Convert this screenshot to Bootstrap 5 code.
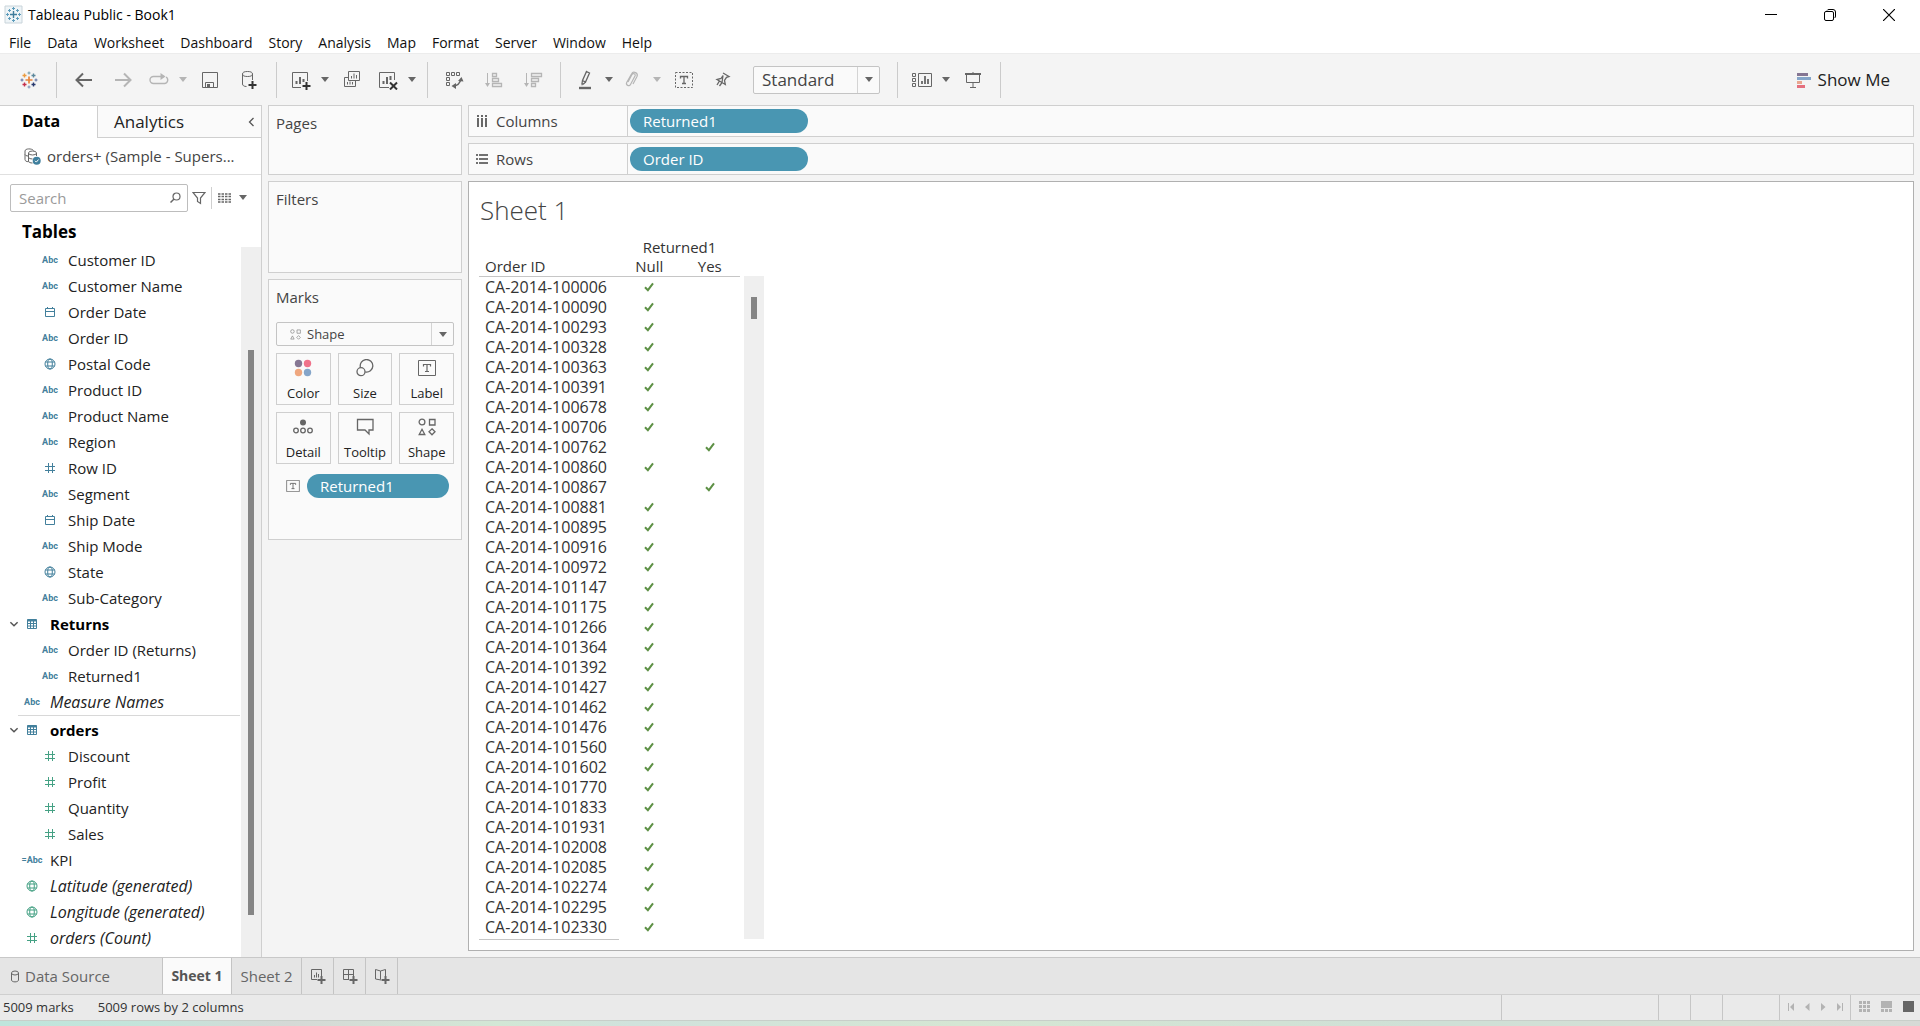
<!DOCTYPE html>
<html lang="en">
<head>
<meta charset="utf-8">
<meta name="viewport" content="width=device-width, initial-scale=1">
<title>Tableau Public - Book1</title>
<link rel="stylesheet" href="https://cdn.jsdelivr.net/npm/bootstrap@5.3.0/dist/css/bootstrap.min.css">
<style>
:root{--line:#cfcfcf;--pill:#4996b2;--shelf:#fafafa;--pane:#f4f4f4}
body{font-family:"Open Sans","Noto Sans",sans-serif;font-size:15px;line-height:20px;color:#222;background:var(--pane);overflow:hidden}
button{border:0;background:none;padding:0;color:inherit}
svg{display:block;flex:none;fill:none;stroke:currentColor}
svg.flat-fill{stroke:none}
.titlebar{height:29px;background:#fff;font-size:14px;color:#000}
.winbtns{margin-right:2px}
.winbtn{width:59px;height:29px}
.menubar{height:25px;background:#fff;font-size:14px;gap:16px;padding:3px 9px 0;border-bottom:1px solid #ececec}
.menubar a{color:#111;text-decoration:none}
.tools{height:51px;color:#666}
.tools .sep{width:1px;height:36px;background:#cbcbcb}
.toolset{padding:0 8px 0 7px}
.toolset.start{padding-left:9px}
.toolset button,.showme{height:36px;display:flex;align-items:center;justify-content:center}
.w-tool{width:39px}.w-drop{width:34px}.w-caret{width:14px}
.off{color:#b5b5b5}
.caret-mark{width:0;height:0;border:4px solid transparent;border-top:5px solid #666;border-bottom:0}
.off .caret-mark{border-top-color:#b5b5b5}
.picker{border:1px solid #c4c4c4;border-radius:2px;background:var(--shelf)}
.picker select{appearance:none;border:0;background:none;outline:0;color:#444;min-width:0}
.picker .drop{width:22px;border-left:1px solid #d4d4d4}
.fitpick{width:127px;height:28px;margin:0 9px 0 11px;font-size:17px}
.fitpick select{padding:0 0 0 8px}
.showme{font-size:17px;color:#222;gap:7px;margin-right:30px}
.datapane{width:262px;background:#fff;border-right:1px solid var(--line);border-top:1px solid var(--line)}
.panetabs{height:32px}
.panetabs button{text-align:left}
.tab-data{width:97px;padding:0 0 2px 22px!important;font-size:16px;font-weight:700;color:#000!important}
.tab-an{background:var(--shelf);border-left:1px solid var(--line)!important;border-bottom:1px solid var(--line)!important;font-size:17px;padding-left:16px!important}
.chev{background:var(--shelf);border-bottom:1px solid var(--line)!important;width:20px;color:#555!important}
.source{height:37px;border-bottom:1px solid #e0e0e0;padding:0 24px;gap:6px;color:#444}
.findrow{padding:9px 14px 0 10px;height:36px;color:#666}
.findbox{width:178px;height:28px;border:1px solid #bdbdbd;border-radius:2px}
.findbox input{border:0;outline:0;width:159px;padding:0 8px;background:none}
.findbox input::placeholder{color:#9a9a9a}
.findrule{width:1px;height:22px;background:#cfcfcf;margin:0 6px 0 5px}
.tables-head{font-size:17px;font-weight:700;padding:11px 22px 0;height:36px;color:#000;margin:0;line-height:20px}
.fields{width:240px}
.fieldrow{height:26px;display:flex;align-items:center;color:#222}
.fieldrow .ic{width:24px;display:flex;justify-content:center;margin-right:6px;color:#43809c}
.fieldrow.deep .ic{margin-left:38px}
.fieldrow.flat .ic{margin-left:20px}
.fieldrow.head{font-weight:700;color:#000}
.fieldrow.head .tog{width:12px;margin-left:8px;color:#555}
.fieldrow.meas .ic{color:#45a184}
.fieldrow.gen{font-style:italic;font-size:16px}
.abc{font:700 9px/12px Roboto,sans-serif;white-space:nowrap}
.cut{border-top:1px solid #d8d8d8;margin-left:18px;height:2px}
.track{width:20px;background:#efefef}
.thumb{width:6px;background:#858585;margin:0 auto}
.pane-thumb{height:565px;margin-top:103px}
.cards{width:194px;margin:0 6px}
.card-gap{margin-top:6px}
.shelfbox{background:var(--shelf);border:1px solid var(--line)}
.cards .shelfbox{padding:7px 7px 0;color:#444}
.pages{height:70px}.filters{height:92px}.marks{height:261px}
.marktype{height:24px;margin-top:15px;font-size:13px;color:#777}
.marktype svg{margin-left:13px}
.marktype select{padding:0 0 0 6px}
.markbtns{gap:7px;margin-top:7px}
.markbtns button{flex:1 1 0;height:52px;border:1px solid var(--line);font-size:13px;line-height:18px;color:#222}
.markbtns svg{color:#666;margin:3px auto 7px}
.tok{background:var(--pill);color:#fff;border-radius:12px;height:24px;line-height:24px;padding:0 13px}
.markfield{gap:7px;padding:0 5px 0 10px;margin-top:10px;color:#666}
.work{min-width:0;margin-right:6px}
.shelfrow{height:32px}
.shelfname{width:159px;border-right:1px solid var(--line);padding-left:7px;gap:8px;color:#444}
.shelfrow .tok{width:178px;margin-left:2px}
.sheet{background:#fff;border:1px solid #b0b0b0;margin-bottom:6px;padding:13px 10px 0}
.sheet h1{font-size:26px;font-weight:300;line-height:30px;color:#444;margin:0 0 12px 1px}
.crosstab{border-collapse:separate;border-spacing:0;table-layout:fixed;width:261px;color:#333}
.crosstab th,.crosstab td{font-weight:400;height:20px;line-height:20px;padding:0;text-align:center}
.crosstab tbody{font-size:16px}
.crosstab .first{width:140px;text-align:left;padding-left:6px}
.crosstab .yn{width:60px}
.crosstab thead tr:last-child th{border-bottom:1px solid #c6c6c6;line-height:19px}
.crosstab svg{margin:auto;color:#5d9045}
.crosstab tfoot td{height:3px;border-bottom:1px solid #c6c6c6}
.crosstab tfoot td+td{border:0}
.sheet .track{margin:39px 0 0 4px;height:663px}
.sheet-thumb{height:22px;margin-top:21px}
.sheettabs{height:38px;background:#e5e5e5;border-top:1px solid #c8c8c8;border-bottom:1px solid #cfcfcf;color:#666}
.sheettabs button{border-right:1px solid #c4c4c4;height:36px;display:flex;align-items:center;justify-content:center}
.src-tab{width:163px;justify-content:flex-start!important;padding-left:10px;gap:5px}
.ws-tab{width:69px}
.ws-tab.on{background:#fafafa;font-weight:700;font-size:14px;color:#555}
.ws-tab.two{width:70px}
.new-tab{width:32px}
.statusbar{height:25px;background:#eaeaea;font-size:13px;color:#333;padding-left:3px;gap:24px}
.statusbar>span{padding-bottom:2px}
.slot{height:25px;border-left:1px solid #c6c6c6;display:flex;align-items:center;color:#b3b3b3}
.slot svg{fill:currentColor;stroke:none;margin-bottom:2px}
.s157{width:157px}.s32{width:32px}.s57{width:57px}.s71{width:71px;justify-content:center;gap:11px}.s70{width:70px;gap:11px;padding-left:8px}
.desk{height:6px;border-top:1px solid #c8cfc9;background:linear-gradient(90deg,#bfe5dc,#c4e4da 8%,#d5d9d6 15%,#d2e7d5 26%,#d0e2dc 33%,#d5e6d3 50%,#cfe0d6 75%,#d5e0d5 90%,#d6dad6)}
</style>
</head>
<body class="vh-100 d-flex flex-column">
<svg width="0" height="0" class="position-absolute" aria-hidden="true">
<defs>
<symbol id="i-hash" viewBox="0 0 12 12"><path d="M4.500 1v10M8.500 1v10M1 4.500h10M1 8.500h10" stroke-width="1"/></symbol>
<symbol id="i-cal" viewBox="0 0 12 12"><path d="M1.500 2.500h9v8h-9zM1.500 5.500h9M3.500 1v2M8.500 1v2"/></symbol>
<symbol id="i-globe" viewBox="0 0 12 12"><circle cx="6" cy="6" r="5"/><ellipse cx="6" cy="6" rx="2.300" ry="5"/><path d="M1.500 4h9M1.500 8h9"/></symbol>
<symbol id="i-table" viewBox="0 0 12 12"><path d="M1.500 1.500h9v9h-9zM1.500 5.500h9M1.500 8h9M4.500 3v7.500M7.500 3v7.500"/><path d="M1.500 2.500h9" stroke-width="2"/></symbol>
<symbol id="i-down" viewBox="0 0 10 10"><path d="M2 3.500l3 3 3-3" stroke-width="1.200"/></symbol>
<symbol id="i-tick" viewBox="0 0 10 10"><path d="M1 5.200l2.900 3L9 1.400" stroke-width="2"/></symbol>
<symbol id="i-text" viewBox="0 0 18 16"><path d="M.5.500h17v15H.5z"/><path d="M5.500 6.500v-2h7v2M9 4.500v7M7 11.500h4" stroke-width="1.200"/></symbol>
<symbol id="i-shapes" viewBox="0 0 18 18"><circle cx="4" cy="4" r="2.900"/><path d="M11.500 1.500h5.500v5.500h-5.500zM4 11.300L6.800 16.500H1.200zM14 10.800l3 3-3 3-3-3z"/></symbol>
</defs>
</svg>

<header>
<div class="titlebar d-flex align-items-center">
  <svg width="20" height="20" class="ms-1" viewBox="0 0 20 20"><path d="M1 1h17v17H1z" fill="#eef4f7" stroke="#c9d4da"/><path d="M9.500 6v7M6 9.500h7" stroke="#3f7c9c" stroke-width="1.400"/><g stroke="#5d9cbb"><path d="M9.500 2v3M8 3.500h3M9.500 14v3M8 15.500h3M3.500 8v3M2 9.500h3M15.500 8v3M14 9.500h3M5.500 4v3M4 5.500h3M13.500 4v3M12 5.500h3M5.500 12v3M4 13.500h3M13.500 12v3M12 13.500h3"/></g></svg>
  <span class="ps-1">Tableau Public - Book1</span>
  <div class="winbtns ms-auto d-flex">
    <button class="winbtn" aria-label="Minimize"><svg class="m-auto" width="12" height="12"><path d="M0 5.500h12"/></svg></button>
    <button class="winbtn" aria-label="Restore"><svg class="m-auto" width="12" height="12"><rect x=".5" y="2.500" width="9" height="9" rx="1.500"/><path d="M3 1.500Q3.500.500 5 .5h4q2.500 0 2.500 2.500v4q0 1.500-1 2"/></svg></button>
    <button class="winbtn" aria-label="Close"><svg class="m-auto" width="12" height="12"><path d="M0 0l12 12M12 0L0 12" stroke-width="1.200"/></svg></button>
  </div>
</div>
<nav class="menubar d-flex align-items-center" aria-label="Menu">
  <a href="#">File</a><a href="#">Data</a><a href="#">Worksheet</a><a href="#">Dashboard</a><a href="#">Story</a><a href="#">Analysis</a><a href="#">Map</a><a href="#">Format</a><a href="#">Server</a><a href="#">Window</a><a href="#">Help</a>
</nav>
<div class="tools d-flex align-items-center">
  <div class="toolset start"><button class="w-tool" aria-label="Start page"><svg width="18" height="18" viewBox="0 0 18 18" stroke-width="1.400"><path d="M9 5.500v7M5.500 9h7" stroke="#e8833a" stroke-width="1.700"/><path d="M9 .5v3M7.500 2h3" stroke="#7199a6" stroke-width="1"/><path d="M9 14.500v3M7.500 16h3" stroke="#7a8fb5" stroke-width="1"/><path d="M2 7.500v3M.5 9h3M16 7.500v3M14.500 9h3" stroke="#5c6ea0" stroke-width="1"/><path d="M4.500 2.500v4M2.500 4.500h4" stroke="#eb9b3f"/><path d="M13.500 2.500v4M11.500 4.500h4" stroke="#5b879b"/><path d="M4.500 11.500v4M2.500 13.500h4" stroke="#c5304c"/><path d="M13.500 11.500v4M11.500 13.500h4" stroke="#27386e"/></svg></button></div>
  <div class="sep"></div>
  <div class="toolset d-flex">
    <button class="w-tool" aria-label="Undo"><svg width="18" height="16"><path d="M17 8H2M8 1.500L1.500 8 8 14.500" stroke-width="2"/></svg></button>
    <button class="w-tool off" aria-label="Redo"><svg width="18" height="16"><path d="M1 8h15M10 1.500L16.500 8 10 14.500" stroke-width="2"/></svg></button>
    <button class="w-drop off" aria-label="Replay"><svg width="20" height="16"><path d="M11 4.500H4.500a3.500 3.500 0 0 0 0 7h11a3.500 3.500 0 0 0 1.500-6.500M11 4.500h4" stroke-width="1.400"/><path d="M11.500 1l5 3.500-5 3.500z" fill="currentColor" stroke="none"/></svg></button>
    <button class="w-caret off" aria-label="Replay options"><span class="caret-mark"></span></button>
    <button class="w-tool" aria-label="Save"><svg width="18" height="18"><path d="M1.500 1.500h15v15h-15zM4.500 16.500v-5h8v5"/><path d="M6 13h3v3.500H6z" fill="currentColor" stroke="none"/></svg></button>
    <button class="w-tool" aria-label="New data source"><svg width="18" height="20"><ellipse cx="7.500" cy="4" rx="5" ry="2.500"/><path d="M2.500 4v10c0 1.500 1.500 2.500 4 2.500M12.500 4v6"/><path d="M12.500 11v8M8.500 15h8" stroke="#333" stroke-width="2"/></svg></button>
  </div>
  <div class="sep"></div>
  <div class="toolset d-flex">
    <button class="w-drop" aria-label="New worksheet"><svg width="20" height="20"><path d="M10 17.500H1.500v-15h15V11"/><path d="M5.500 14v-3M9 14V7M12.500 12V9" stroke-width="2"/><path d="M15.500 12v8M11.500 16h8" stroke="#333" stroke-width="2"/></svg></button>
    <button class="w-caret" aria-label="New worksheet options"><span class="caret-mark"></span></button>
    <button class="w-tool" aria-label="Duplicate"><svg width="20" height="20"><path d="M6.500 1.500h11v9h-11zM6.500 7.500h-4v9h11v-6M9.500 8.500V6M12 8.500v-5M14.500 8.500V5M5.500 14.500V12M8 14.500v-3M10.500 14.500V12"/></svg></button>
    <button class="w-drop" aria-label="Clear sheet"><svg width="20" height="20"><path d="M11 17.500H1.500v-15h15V10"/><path d="M5.500 14v-3M9 14V7M12.500 10V6" stroke-width="2"/><path d="M12 12.500l7 7M19 12.500l-7 7" stroke="#333" stroke-width="2"/></svg></button>
    <button class="w-caret" aria-label="Clear options"><span class="caret-mark"></span></button>
  </div>
  <div class="sep"></div>
  <div class="toolset d-flex">
    <button class="w-tool" aria-label="Swap rows and columns"><svg width="20" height="20"><path d="M1.500 2.500h3v3h-3zM6.500 2.500h3v3h-3zM11.500 2.500h3v3h-3zM1.500 7.500h3v3h-3zM1.500 12.500h3v3h-3z"/><path d="M8.500 16q6-.5 7.500-7" stroke-width="1.300"/><path d="M13 11l3.500-4 2 4.500zM11 13l-4.500 3 4.500 3z" fill="currentColor" stroke="none"/></svg></button>
    <button class="w-tool off" aria-label="Sort ascending"><svg width="20" height="18"><path d="M3.500 2v11" /><path d="M1 12h5l-2.500 4z" fill="currentColor" stroke="none"/><path d="M8.500 2.500h4v3h-4zM8.500 7.500h6v3h-6zM8.500 12.500h9v3h-9z" stroke-width="1.300"/></svg></button>
    <button class="w-tool off" aria-label="Sort descending"><svg width="20" height="18"><path d="M3.500 2v11"/><path d="M1 12h5l-2.500 4z" fill="currentColor" stroke="none"/><path d="M8.500 2.500h10v3h-10zM8.500 7.500h7v3h-7zM8.500 12.500h4v3h-4z" stroke-width="1.300"/></svg></button>
  </div>
  <div class="sep"></div>
  <div class="toolset d-flex align-items-center">
    <button class="w-drop" aria-label="Highlight"><svg width="18" height="20" class="ms-1"><path d="M8.500 1.500l3 1.500-4 9-3-1.500zM4.500 10.500L4 13.500l1.500.5 2-2M3.500 14.500l1 .5" stroke-width="1.300"/><path d="M1 18h12" stroke-width="2.400"/></svg></button>
    <button class="w-caret" aria-label="Highlight options"><span class="caret-mark"></span></button>
    <button class="w-drop off" aria-label="Group"><svg width="18" height="20"><path d="M4 12l4-7.500c1-1.800 4-.5 3 1.500l-4.500 8.500c-1.300 2.500-5 .5-3.800-2L7.500 4c1.800-3.500 7-1 5.500 2.500L9 14" stroke-width="1.200"/></svg></button>
    <button class="w-caret off" aria-label="Group options"><span class="caret-mark"></span></button>
    <button class="w-tool" aria-label="Show mark labels"><svg width="18" height="16"><path d="M.5.500h17v15H.5z" stroke-dasharray="2 1.500"/><path d="M5.500 6.500v-2h7v2M9 4.500v7M7 11.500h4" stroke-width="1.300"/></svg></button>
    <button class="w-tool" aria-label="Fix axes"><svg width="18" height="18" viewBox="0 0 18 18"><path d="M9 2l6 3.500-2.500.8-2 3.200.8 4L8 11.500 5.500 15M8 11.500L3 8.500l4-1L9 4.500zM5.500 9.800L3 14" stroke-width="1.300"/></svg></button>
    <label class="picker fitpick d-flex"><select class="flex-fill" aria-label="Fit"><option>Standard</option><option>Entire View</option></select><span class="drop d-flex align-items-center justify-content-center"><span class="caret-mark"></span></span></label>
  </div>
  <div class="sep"></div>
  <div class="toolset d-flex">
    <button class="w-drop" aria-label="Show cards"><svg width="22" height="18"><path d="M7.500 2.500h13v13h-13zM1.500 2.500h3v3h-3zM1.500 7.500h3v3h-3zM1.500 12.500h3v3h-3z"/><path d="M11 13v-3M14 13V5M17 13V8" stroke-width="1.800"/></svg></button>
    <button class="w-caret" aria-label="Card options"><span class="caret-mark"></span></button>
    <button class="w-tool" aria-label="Presentation mode"><svg width="18" height="18"><path d="M2.500 3v8.500h13V3M9 1v2M9 11.500V16M6 16.500h6"/><path d="M1 3h16" stroke-width="2"/></svg></button>
  </div>
  <div class="sep"></div>
  <button class="showme ms-auto"><svg class="flat-fill" width="14" height="16"><path d="M0 1h11v3H0z" fill="#857693"/><path d="M0 5h14v3H0z" fill="#85a5c9"/><path d="M0 9h5v3H0z" fill="#eaa68f"/><path d="M0 13h8v3H0z" fill="#e5707e"/></svg>Show Me</button>
</div>
</header>

<main class="d-flex flex-fill overflow-hidden">
<aside class="datapane d-flex flex-column flex-shrink-0">
  <div class="panetabs d-flex">
    <button class="tab-data">Data</button><button class="tab-an flex-fill">Analytics</button><button class="chev" aria-label="Collapse pane"><svg class="mx-auto" width="7" height="10"><path d="M5.500 1L1.500 5l4 4" stroke-width="1.300"/></svg></button>
  </div>
  <div class="source d-flex align-items-center">
    <svg width="17" height="17"><path d="M9.500 2.500C8 .3 1 .3 1 3v8.500C1 13 2.500 13.700 4.500 13.700M1 6.500q.5 1.500 3 1.500M4.500 5v8c0 1.500 2 2 4 2M4.500 9.500q1 1.500 4 1.500M12.500 5v3" stroke="#666"/><ellipse cx="8.500" cy="5" rx="4" ry="2" stroke="#666"/><circle cx="12.700" cy="12.700" r="4" fill="#3f7f9d" stroke="none"/><path d="M11 12.800l1.300 1.300 2.300-2.600" stroke="#fff"/></svg>
    <span class="text-nowrap">orders+ (Sample - Supers...</span>
  </div>
  <div class="findrow d-flex align-items-center">
    <div class="findbox d-flex align-items-center"><input type="text" placeholder="Search" aria-label="Search fields"><button aria-label="Search"><svg width="11" height="11"><circle cx="6.500" cy="4.500" r="3.500" stroke-width="1.200"/><path d="M4 7L.5 10.500" stroke-width="1.500"/></svg></button></div>
    <button class="ms-1" aria-label="Filter fields"><svg width="14" height="14"><path d="M1 1.500h12L8.500 7v5.500l-3-2V7z" stroke-width="1.200"/></svg></button>
    <span class="findrule"></span>
    <button aria-label="View fields" class="d-flex align-items-center gap-2"><svg width="13" height="10"><path d="M0 1h13M0 3.500h13M0 6.500h13M0 9h13" stroke-dasharray="2.500 1" stroke-width="1.400"/></svg><span class="caret-mark"></span></button>
  </div>
  <h2 class="tables-head">Tables</h2>
  <div class="d-flex flex-fill">
    <ul class="fields list-unstyled m-0" id="fields"></ul>
    <div class="track ms-auto"><div class="thumb pane-thumb"></div></div>
  </div>
</aside>

<section class="cards d-flex flex-column flex-shrink-0" aria-label="Cards">
  <div class="shelfbox pages">Pages</div>
  <div class="shelfbox filters card-gap">Filters</div>
  <div class="shelfbox marks card-gap">Marks
    <label class="picker marktype d-flex align-items-center"><svg width="11" height="11"><use href="#i-shapes"/></svg><select class="flex-fill" aria-label="Mark type"><option>Shape</option><option>Automatic</option></select><span class="drop d-flex align-items-center justify-content-center align-self-stretch"><span class="caret-mark"></span></span></label>
    <div class="markbtns d-flex">
      <button><svg class="flat-fill" width="18" height="18"><circle cx="4.500" cy="4.500" r="3.700" fill="#857693"/><circle cx="13.500" cy="4.500" r="3.700" fill="#f0728a"/><circle cx="4.500" cy="13.500" r="3.700" fill="#efa77f"/><circle cx="13.500" cy="13.500" r="3.700" fill="#85a5c9"/></svg>Color</button>
      <button><svg width="18" height="18" stroke-width="1.300"><path d="M4.400 8.300A6.300 6.300 0 1 1 9.300 13"/><circle cx="5" cy="12.700" r="4"/></svg>Size</button>
      <button><svg width="18" height="18" viewBox="0 0 18 16"><use href="#i-text"/></svg>Label</button>
    </div>
    <div class="markbtns d-flex">
      <button><svg width="20" height="18" stroke-width="1.300"><circle cx="10" cy="4.500" r="3" fill="currentColor" stroke="none"/><circle cx="3" cy="12.500" r="2.300"/><circle cx="10" cy="12.500" r="2.300"/><circle cx="17" cy="12.500" r="2.300"/></svg>Detail</button>
      <button><svg width="18" height="18" stroke-width="1.300"><path d="M1.500 1.500h15.500v10.500h-4v4l-4-4H1.500z"/></svg>Tooltip</button>
      <button><svg width="18" height="18" stroke-width="1.300"><use href="#i-shapes"/></svg>Shape</button>
    </div>
    <div class="markfield d-flex align-items-center"><svg width="14" height="12"><use href="#i-text"/></svg><div class="tok flex-fill">Returned1</div></div>
  </div>
</section>

<section class="work flex-fill d-flex flex-column">
  <div class="shelfbox shelfrow d-flex align-items-center">
    <div class="shelfname d-flex align-items-center align-self-stretch"><svg width="12" height="12"><path d="M2 0v2M6 0v2M10 0v2M2 3v9M6 3v9M10 3v9" stroke-width="1.600"/></svg>Columns</div><div class="tok">Returned1</div>
  </div>
  <div class="shelfbox shelfrow d-flex align-items-center card-gap">
    <div class="shelfname d-flex align-items-center align-self-stretch"><svg width="12" height="12"><path d="M0 2h2M0 6h2M0 10h2M3 2h9M3 6h9M3 10h9" stroke-width="1.600"/></svg>Rows</div><div class="tok">Order ID</div>
  </div>
  <div class="sheet flex-fill card-gap">
    <h1>Sheet 1</h1>
    <div class="d-flex align-items-start">
      <table class="crosstab">
        <thead>
          <tr><th class="first"></th><th colspan="2">Returned1</th></tr>
          <tr><th class="first">Order ID</th><th class="yn">Null</th><th class="yn">Yes</th></tr>
        </thead>
        <tbody id="orders"></tbody>
        <tfoot><tr><td></td><td colspan="2"></td></tr></tfoot>
      </table>
      <div class="track"><div class="thumb sheet-thumb"></div></div>
    </div>
  </div>
</section>
</main>

<footer>
<div class="sheettabs d-flex">
  <button class="src-tab"><svg width="10" height="13"><ellipse cx="5" cy="3" rx="3.500" ry="2"/><path d="M1.500 3v7c0 2.500 7 2.500 7 0V3"/></svg>Data Source</button>
  <button class="ws-tab on">Sheet 1</button>
  <button class="ws-tab two">Sheet 2</button>
  <button class="new-tab" aria-label="New worksheet"><svg width="16" height="16"><path d="M7 11.500H1.500v-10h10V8M4.500 9.500V7M6.500 9.500V4.500M8.500 9.500V6"/><path d="M11.500 8v8M7.500 12h8" stroke-width="2"/></svg></button>
  <button class="new-tab" aria-label="New dashboard"><svg width="16" height="16"><path d="M7 11.500H1.500v-10h10V8M6.500 1.500v10M1.500 6.500h10"/><path d="M11.500 8v8M7.500 12h8" stroke-width="2"/></svg></button>
  <button class="new-tab" aria-label="New story"><svg width="16" height="16"><path d="M7 12L1.500 11V1.500L6.500 3l5-1.500V8M6.500 3v8.500"/><path d="M11.500 8v8M7.500 12h8" stroke-width="2"/></svg></button>
</div>
<div class="statusbar d-flex align-items-center">
  <span>5009 marks</span><span>5009 rows by 2 columns</span>
  <div class="ms-auto d-flex">
    <div class="slot s157"></div><div class="slot s32"></div><div class="slot s32"></div><div class="slot s57"></div>
    <div class="slot s71">
      <svg width="6" height="8"><path d="M0 0h1v8H0zM6 0v8L2 4z"/></svg><svg width="5" height="8"><path d="M4.500 0v8L0 4z"/></svg><svg width="5" height="8"><path d="M0 0v8l4.500-4z"/></svg><svg width="6" height="8"><path d="M5 0h1v8H5zM0 0v8l4-4z"/></svg>
    </div>
    <div class="slot s70">
      <svg width="11" height="11"><path d="M0 0h3v3H0zM4 0h3v3H4zM8 0h3v3H8zM0 4h3v3H0zM4 4h3v3H4zM8 4h3v3H8zM0 8h3v3H0zM4 8h3v3H4zM8 8h3v3H8z"/></svg>
      <svg width="11" height="11"><path d="M0 0h11v7H0zM0 8h3v3H0zM4 8h3v3H4zM8 8h3v3H8z"/></svg>
      <svg width="11" height="11"><path d="M0 0h11v11H0z" fill="#666"/></svg>
    </div>
  </div>
</div>
<div class="desk"></div>
</footer>

<script src="https://cdn.jsdelivr.net/npm/bootstrap@5.3.0/dist/js/bootstrap.bundle.min.js"></script>
<script>
// [name, icon, row classes]
const fields = [
  ["Customer ID","abc","deep"],["Customer Name","abc","deep"],["Order Date","cal","deep"],["Order ID","abc","deep"],
  ["Postal Code","globe","deep"],["Product ID","abc","deep"],["Product Name","abc","deep"],["Region","abc","deep"],
  ["Row ID","hash","deep"],["Segment","abc","deep"],["Ship Date","cal","deep"],["Ship Mode","abc","deep"],
  ["State","globe","deep"],["Sub-Category","abc","deep"],["Returns","table","head"],["Order ID (Returns)","abc","deep"],
  ["Returned1","abc","deep"],["Measure Names","abc","flat gen"],null,["orders","table","head"],
  ["Discount","hash","deep meas"],["Profit","hash","deep meas"],["Quantity","hash","deep meas"],["Sales","hash","deep meas"],
  ["KPI","calc","flat"],["Latitude (generated)","globe","flat gen meas"],["Longitude (generated)","globe","flat gen meas"],
  ["orders (Count)","hash","flat gen meas"]
];
const use = (id, s) => `<svg width="${s}" height="${s}"><use href="#i-${id}"/></svg>`;
document.getElementById("fields").innerHTML = fields.map(f => {
  if (!f) return '<li class="cut"></li>';
  const ic = f[1] === "abc" ? '<span class="abc">Abc</span>' : f[1] === "calc" ? '<span class="abc">=Abc</span>' : use(f[1], 12);
  const tog = f[2] === "head" ? `<span class="tog">${use("down", 12)}</span>` : "";
  return `<li class="fieldrow ${f[2]}">${tog}<span class="ic">${ic}</span>${f[0]}</li>`;
}).join("");

const ids = "100006 100090 100293 100328 100363 100391 100678 100706 100762 100860 100867 100881 100895 100916 100972 101147 101175 101266 101364 101392 101427 101462 101476 101560 101602 101770 101833 101931 102008 102085 102274 102295 102330".split(" ");
const returned = ["100762", "100867"];
const tick = use("tick", 10);
document.getElementById("orders").innerHTML = ids.map(n => {
  const yes = returned.includes(n);
  return `<tr><td class="first">CA-2014-${n}</td><td>${yes ? "" : tick}</td><td>${yes ? tick : ""}</td></tr>`;
}).join("");
</script>
</body>
</html>
